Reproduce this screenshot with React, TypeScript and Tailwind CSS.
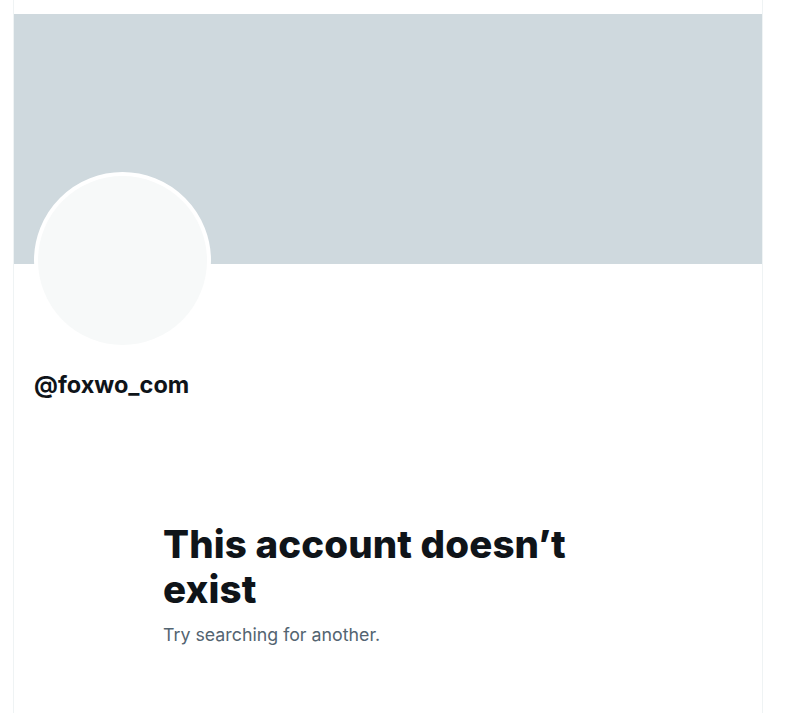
export default function App() {
  return (
    <div className="min-h-screen bg-white" style={{ fontFamily: "Inter, 'Noto Sans', sans-serif" }}>
      <div className="ml-[13px] w-[750px] min-h-[713px] border-x border-[#eff3f4] pt-[14px]">
        <div className="h-[250px] bg-[#cfd9de]" />
        <div className="px-5">
          <div className="-mt-[92px] h-[177px] w-[177px] rounded-full border-4 border-white bg-[#f7f9f9]" />
          <div className="mt-[22px] text-[23.5px] font-bold leading-[28px] text-[#0f1419]">@foxwo_com</div>
        </div>
        <div className="mx-auto mt-[123px] w-[450px]">
          <h1 className="text-[38.5px] font-extrabold leading-[45px] tracking-[0.1px] text-[#0f1419]">
            This account doesn’t exist
          </h1>
          <p className="mt-[10px] text-[17.8px] leading-[25px] text-[#536471]">Try searching for another.</p>
        </div>
      </div>
    </div>
  );
}
